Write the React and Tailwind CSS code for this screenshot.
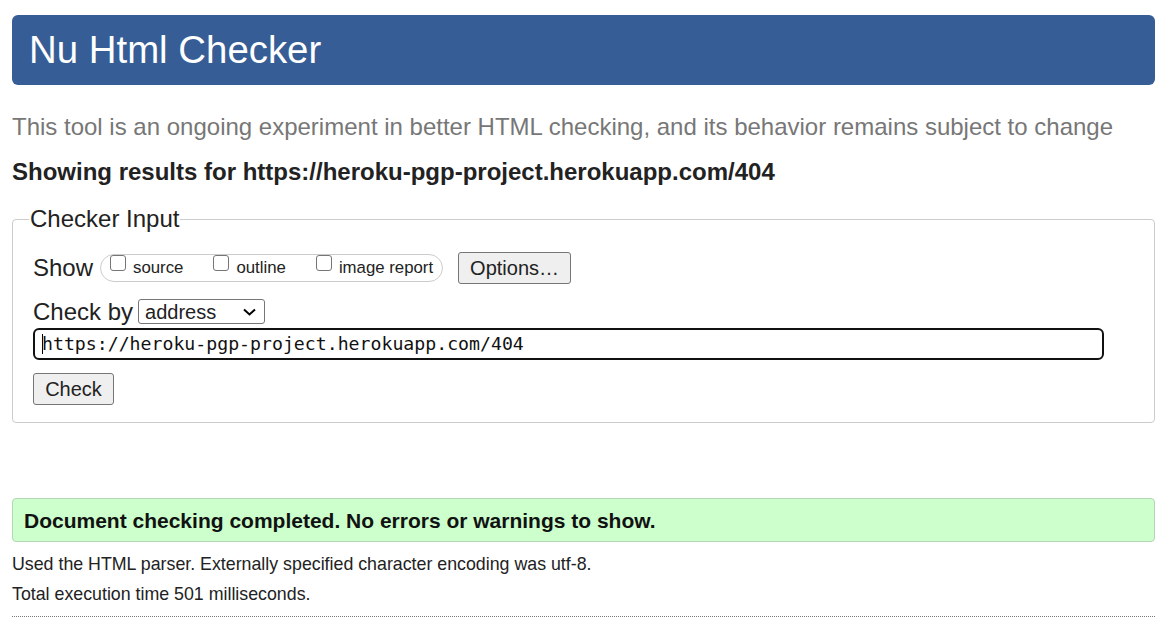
export default function App() {
  return (
    <div
      className="min-h-screen bg-white px-3 pt-[15px] text-[#222]"
      style={{ fontFamily: '"Liberation Sans", Arial, sans-serif' }}
    >
      <h1 className="flex h-[70px] items-center rounded-md bg-[#365d95] pl-[17px] text-[38.4px] font-normal leading-none text-white">
        Nu Html Checker
      </h1>

      <p className="mt-[30px] text-[24px] leading-none text-[#777]">
        This tool is an ongoing experiment in better HTML checking, and its behavior remains subject to change
      </p>

      <p className="mt-[21px] text-[24px] font-bold leading-none text-[#222]">
        Showing results for https://heroku-pgp-project.herokuapp.com/404
      </p>

      <fieldset className="mt-[23px] rounded border border-[#ccc] px-[20px] pb-[17px] pt-[21px]">
        <legend className="-ml-[4px] px-[1px] text-[24px] leading-none text-[#222]">Checker Input</legend>

        <div className="flex h-[32px] items-center">
          <span className="text-[24px] leading-none">Show</span>
          <div className="ml-[7px] flex h-[28px] items-center gap-[30px] rounded-full border border-[#ccc] pl-[9px] pr-[9px]">
            <label className="flex items-center gap-[7px] text-[16.8px] leading-none">
              <span className="-mt-[10px] h-[16px] w-[16px] rounded-[3px] border border-[#767676] bg-white" />
              source
            </label>
            <label className="flex items-center gap-[7px] text-[16.8px] leading-none">
              <span className="-mt-[10px] h-[16px] w-[16px] rounded-[3px] border border-[#767676] bg-white" />
              outline
            </label>
            <label className="flex items-center gap-[7px] text-[16.8px] leading-none">
              <span className="-mt-[10px] h-[16px] w-[16px] rounded-[3px] border border-[#767676] bg-white" />
              image report
            </label>
          </div>
          <button className="ml-[15px] h-[32px] rounded-[3px] border border-[#767676] bg-[#efefef] px-[11px] text-[20px] leading-none">
            Options…
          </button>
        </div>

        <div className="mt-[15px] flex h-[25px] items-center">
          <span className="text-[24px] leading-none">Check by</span>
          <div className="ml-[5px] flex h-[25px] w-[127px] items-center justify-between rounded-[3px] border border-[#767676] pl-[6px] pr-[8px] text-[20px] leading-none">
            address
            <svg width="13" height="8" viewBox="0 0 13 8" fill="none" stroke="#000" strokeWidth="2">
              <path d="M1 1.5l5.5 5 5.5-5" />
            </svg>
          </div>
        </div>

        <div
          className="mt-[4px] flex h-[32px] w-[1071px] items-center rounded-md border-2 border-[#111] pl-[7px] text-[18.2px] leading-none text-[#111]"
          style={{ fontFamily: '"DejaVu Sans Mono", "Liberation Mono", monospace' }}
        >
          <span className="mr-[-1px] h-[20px] w-px bg-black" />
          https://heroku-pgp-project.herokuapp.com/404
        </div>

        <button className="mt-[13px] h-[32px] w-[81px] rounded-[3px] border border-[#767676] bg-[#efefef] text-[20px] leading-none">
          Check
        </button>
      </fieldset>

      <div className="mt-[75px] flex h-[44px] items-center rounded border border-[#b5d6b5] bg-[#ccffcc] pl-[11px] text-[21px] font-bold leading-none text-[#111]">
        Document checking completed. No errors or warnings to show.
      </div>

      <p className="mt-[7px] text-[17.8px] leading-[30px] text-[#222]">
        Used the HTML parser. Externally specified character encoding was utf-8.
      </p>
      <p className="text-[17.8px] leading-[30px] text-[#222]">Total execution time 501 milliseconds.</p>

      <div className="mt-[7px] border-b border-dotted border-[#777]" />
    </div>
  );
}
